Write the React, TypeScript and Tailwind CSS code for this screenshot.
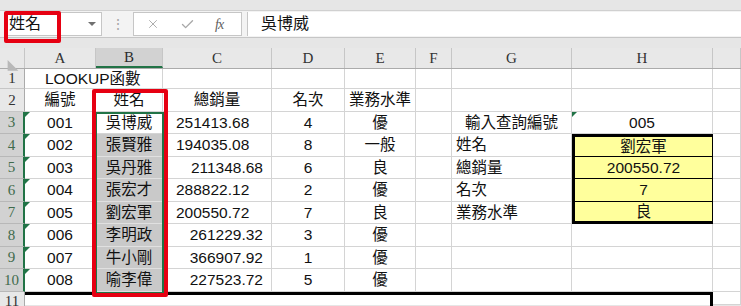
import { X, Check } from "lucide-react";

const COLS = [
  "w-[25px]",
  "w-[71px]",
  "w-[67px]",
  "w-[109px]",
  "w-[73px]",
  "w-[71px]",
  "w-[36px]",
  "w-[120px]",
  "w-[141px]",
  "w-[28px]",
];
const LETTERS = ["", "A", "B", "C", "D", "E", "F", "G", "H", ""];

type Row = {
  id: string;
  name: string;
  sales: string;
  right: boolean;
  rank: string;
  level: string;
};

const DATA: Row[] = [
  { id: "001", name: "吳博威", sales: "251413.68", right: false, rank: "4", level: "優" },
  { id: "002", name: "張賢雅", sales: "194035.08", right: false, rank: "8", level: "一般" },
  { id: "003", name: "吳丹雅", sales: "211348.68", right: true, rank: "6", level: "良" },
  { id: "004", name: "張宏才", sales: "288822.12", right: false, rank: "2", level: "優" },
  { id: "005", name: "劉宏軍", sales: "200550.72", right: false, rank: "7", level: "良" },
  { id: "006", name: "李明政", sales: "261229.32", right: true, rank: "3", level: "優" },
  { id: "007", name: "牛小剛", sales: "366907.92", right: true, rank: "1", level: "優" },
  { id: "008", name: "喻李偉", sales: "227523.72", right: true, rank: "5", level: "優" },
];

const HEIGHTS = ["h-[22px]", "h-[23px]", "h-[22px]", "h-[23px]", "h-[22px]", "h-[23px]", "h-[22px]", "h-[23px]"];

const G_LABELS = ["輸入查詢編號", "姓名", "總銷量", "名次", "業務水準", "", "", ""];
const H_VALUES = ["005", "劉宏軍", "200550.72", "7", "良", "", "", ""];

const cell = "shrink-0 border-r border-b border-[#d4d4d4] flex items-center";

function Flag() {
  return (
    <span className="absolute left-0 top-0 w-0 h-0 border-t-[5px] border-t-[#217346] border-r-[5px] border-r-transparent" />
  );
}

function RowHead({ n, sel, h }: { n: number; sel?: boolean; h: string }) {
  return (
    <div
      className={`${COLS[0]} ${h} shrink-0 flex items-center justify-center border-b font-['Liberation_Serif',serif] text-[15px] ${
        sel
          ? "bg-[#d2d2d2] border-b-[#b8b8b8] border-r-2 border-r-[#217346] text-[#3f6b4c]"
          : "bg-[#e8e8e8] border-b-[#c6c6c6] border-r border-r-[#ababab] text-[#333]"
      }`}
    >
      {n}
    </div>
  );
}

export default function App() {
  return (
    <div className="relative w-[741px] h-[306px] overflow-hidden bg-[#e6e6e6] text-[#111] font-['Liberation_Sans','Noto_Sans_CJK_TC',sans-serif]">
      {/* formula bar */}
      <div className="h-[11px] border-b border-[#d0d0d0]" />
      <div className="h-[27px] flex items-stretch bg-[#f3f3f3] border-b border-[#c6c6c6]">
        <div className="ml-[4px] w-[98px] my-[1px] bg-white border border-[#c6c6c6] flex items-center pl-[4px] pr-[5px] text-[16px]">
          <span className="flex-1">姓名</span>
          <span className="w-0 h-0 border-l-[4px] border-r-[4px] border-t-[4px] border-l-transparent border-r-transparent border-t-[#707070]" />
        </div>
        <div className="w-[31px] flex items-center justify-center text-[#a6a6a6] text-[14px]">⋮</div>
        <div className="w-[109px] my-[1px] bg-white border border-[#c6c6c6] flex items-center pl-[12px] gap-[20px] text-[#a8a8a8]">
          <X size={14} strokeWidth={1.6} />
          <Check size={15} strokeWidth={2.2} />
          <span className="italic font-['Liberation_Serif',serif] text-[14px] text-[#606060] tracking-[-1px]">fx</span>
        </div>
        <div className="flex-1 ml-[5px] my-[1px] bg-white border-l border-[#c6c6c6] flex items-center pl-[13px] text-[16px]">
          吳博威
        </div>
      </div>
      <div className="h-[10px]" />

      {/* column header */}
      <div className="flex h-[21px] bg-[#e8e8e8] border-b border-[#ababab]">
        {LETTERS.map((l, i) => (
          <div
            key={i}
            className={`${COLS[i]} shrink-0 flex items-center justify-center border-r border-[#c6c6c6] font-['Liberation_Serif',serif] text-[15px] ${
              i === 2 ? "bg-[#d2d2d2] border-b-2 border-b-[#217346] text-[#2b2b2b]" : "text-[#333]"
            }`}
          >
            {i === 0 ? (
              <span className="w-0 h-0 mt-[4px] ml-[2px] border-l-[12px] border-t-[12px] border-l-transparent border-t-transparent border-b-0 border-r-[12px] border-r-[#b8b8b8] rotate-90 scale-[0.9]" />
            ) : (
              l
            )}
          </div>
        ))}
      </div>

      <div className="bg-white text-[15.5px]">
        {/* row 1 */}
        <div className="flex h-[20px]">
          <RowHead n={1} h="h-[20px]" />
          <div className={`${COLS[1]} ${cell} border-r-0 pl-[20px] whitespace-nowrap overflow-visible`}>LOOKUP函數</div>
          <div className={`${COLS[2]} ${cell}`} />
          {COLS.slice(3).map((w, i) => (
            <div key={i} className={`${w} ${cell}`} />
          ))}
        </div>
        {/* row 2 */}
        <div className="flex h-[23px]">
          <RowHead n={2} h="h-[23px]" />
          <div className={`${COLS[1]} ${cell} justify-center`}>編號</div>
          <div className={`${COLS[2]} ${cell} justify-center`}>姓名</div>
          <div className={`${COLS[3]} ${cell} justify-center`}>總銷量</div>
          <div className={`${COLS[4]} ${cell} justify-center`}>名次</div>
          <div className={`${COLS[5]} ${cell} justify-center`}>業務水準</div>
          {COLS.slice(6).map((w, i) => (
            <div key={i} className={`${w} ${cell}`} />
          ))}
        </div>

        {DATA.map((r, i) => {
          const h = HEIGHTS[i];
          const inBox = i >= 1 && i <= 4;
          return (
            <div key={r.id} className={`flex ${h}`}>
              <RowHead n={i + 3} sel h={h} />
              <div className={`${COLS[1]} ${cell} justify-center relative`}>
                <Flag />
                {r.id}
              </div>
              <div className={`${COLS[2]} ${cell} justify-center ${i === 0 ? "" : "bg-[#c9c9c9] border-b-[#e0e0e0]"}`}>
                {r.name}
              </div>
              <div className={`${COLS[3]} ${cell} ${r.right ? "justify-end pr-[8px]" : "pl-[13px]"}`}>{r.sales}</div>
              <div className={`${COLS[4]} ${cell} justify-center`}>{r.rank}</div>
              <div className={`${COLS[5]} ${cell} justify-center`}>{r.level}</div>
              <div className={`${COLS[6]} ${cell}`} />
              <div className={`${COLS[7]} ${cell} ${i === 0 ? "justify-center" : "pl-[4px]"}`}>{G_LABELS[i]}</div>
              <div
                className={`${COLS[8]} ${cell} justify-center relative ${
                  inBox
                    ? `bg-[#ffff9c] border-x-[3px] border-x-black ${i === 1 ? "border-t-[3px] border-t-black" : ""} ${
                        i === 4 ? "border-b-[3px] border-b-black" : "border-b-black"
                      }`
                    : ""
                }`}
              >
                {i === 0 && <Flag />}
                {H_VALUES[i]}
              </div>
              <div className={`${COLS[9]} ${cell}`} />
            </div>
          );
        })}

        {/* row 11 */}
        <div className="flex h-[13px]">
          <RowHead n={11} h="h-[20px]" />
          {COLS.slice(1, 9).map((w, i) => (
            <div
              key={i}
              className={`${w} shrink-0 h-[20px] border-t-[3px] border-black ${i === 7 ? "border-r-[3px]" : ""}`}
            />
          ))}
          <div className={`${COLS[9]} ${cell}`} />
        </div>
      </div>

      {/* selection border B3:B10 */}
      <div className="absolute left-[95px] top-[112px] w-[69px] h-[182px] border-2 border-[#217346] pointer-events-none" />
      {/* red annotation boxes */}
      <div className="absolute left-[4px] top-[11px] w-[57px] h-[32px] border-[4px] border-[#e60012] rounded-[2px] pointer-events-none" />
      <div className="absolute left-[92px] top-[89px] w-[76px] h-[208px] border-[4px] border-[#e60012] rounded-[2px] pointer-events-none" />
    </div>
  );
}
